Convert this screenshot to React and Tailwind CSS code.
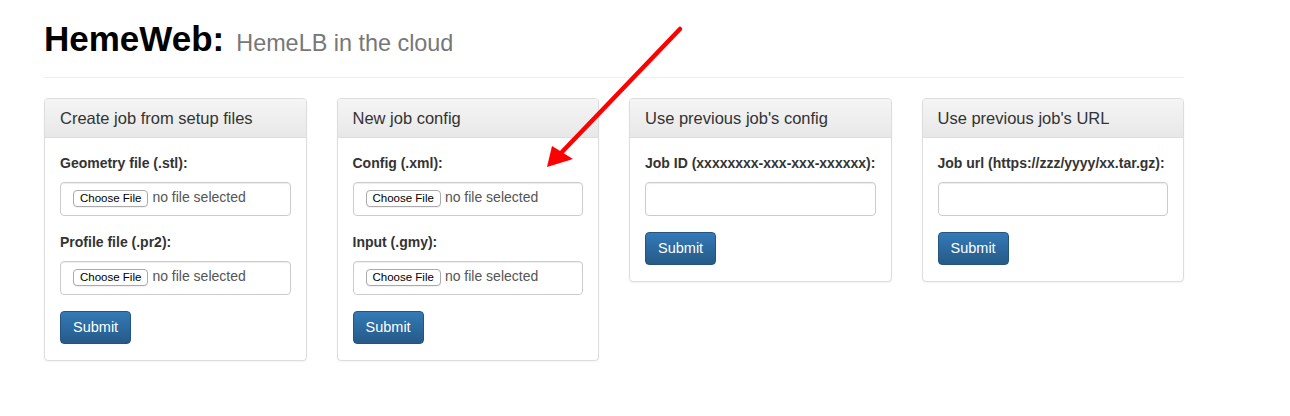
import React from 'react';

const panels = [
  {
    title: 'Create job from setup files',
    fields: [
      { label: 'Geometry file (.stl):', type: 'file' },
      { label: 'Profile file (.pr2):', type: 'file' },
    ],
  },
  {
    title: 'New job config',
    fields: [
      { label: 'Config (.xml):', type: 'file' },
      { label: 'Input (.gmy):', type: 'file' },
    ],
  },
  {
    title: "Use previous job's config",
    fields: [{ label: 'Job ID (xxxxxxxx-xxx-xxx-xxxxxx):', type: 'text' }],
  },
  {
    title: "Use previous job's URL",
    fields: [{ label: 'Job url (https://zzz/yyyy/xx.tar.gz):', type: 'text' }],
  },
];

function FileInput() {
  return (
    <div className="h-[34px] rounded-[4px] border border-[#ccc] bg-white shadow-[inset_0_1px_1px_rgba(0,0,0,0.075)] flex items-center pl-[12px] gap-[4px]">
      <span className="h-[17px] px-[6px] rounded-[4px] border border-[#aaa] bg-white text-[11.5px] leading-[15px] text-black flex items-center shadow-[0_1px_0_rgba(0,0,0,0.05)]">
        Choose File
      </span>
      <span className="text-[14px] text-[#555] -mt-[3px]">no file selected</span>
    </div>
  );
}

function TextInput() {
  return (
    <div className="h-[34px] rounded-[4px] border border-[#ccc] bg-white shadow-[inset_0_1px_1px_rgba(0,0,0,0.075)]" />
  );
}

function Panel({ title, fields }) {
  return (
    <div className="rounded-[4px] border border-[#ddd] bg-white shadow-[0_1px_2px_rgba(0,0,0,0.05)] overflow-hidden">
      <div className="px-[15px] pt-[11px] pb-[9px] border-b border-[#ddd] bg-gradient-to-b from-[#f5f5f5] to-[#e8e8e8] text-[16.5px] leading-[17.6px] text-[#333]">
        {title}
      </div>
      <div className="px-[15px] pt-[15px] pb-[16px]">
        {fields.map((f) => (
          <div key={f.label} className="mb-[16px]">
            <div className="text-[14px] leading-[20px] font-bold text-[#333] mb-[9px] whitespace-nowrap">
              {f.label}
            </div>
            {f.type === 'file' ? <FileInput /> : <TextInput />}
          </div>
        ))}
        <button className="h-[33px] px-[12px] rounded-[4px] border border-[#245580] bg-gradient-to-b from-[#337ab7] to-[#265a88] text-white text-[14.5px] leading-[20px]">
          Submit
        </button>
      </div>
    </div>
  );
}

export default function App() {
  return (
    <div className="relative w-[1290px] h-[416px] bg-white font-['Liberation_Sans',Arial,sans-serif] text-[#333]">
      <div className="w-[1140px] ml-[44px]">
        {/* Page header */}
        <div className="pt-[19px] pb-[16px] border-b border-[#eee] flex items-baseline gap-[12px]">
          <h1 className="text-[35px] leading-[40px] font-bold text-black">HemeWeb:</h1>
          <small className="text-[23.4px] text-[#777]">HemeLB in the cloud</small>
        </div>

        {/* Panels */}
        <div className="mt-[20px] grid grid-cols-4 gap-[30px] items-start">
          {panels.map((p) => (
            <Panel key={p.title} {...p} />
          ))}
        </div>
      </div>

      {/* Red annotation arrow */}
      <svg className="absolute left-0 top-0 pointer-events-none" width="1290" height="416">
        <line x1="680" y1="29" x2="562" y2="152" stroke="#ff0000" strokeWidth="4.5" strokeLinecap="round" />
        <polygon points="547,167 552,146 573,159" fill="#ff0000" />
      </svg>
    </div>
  );
}
